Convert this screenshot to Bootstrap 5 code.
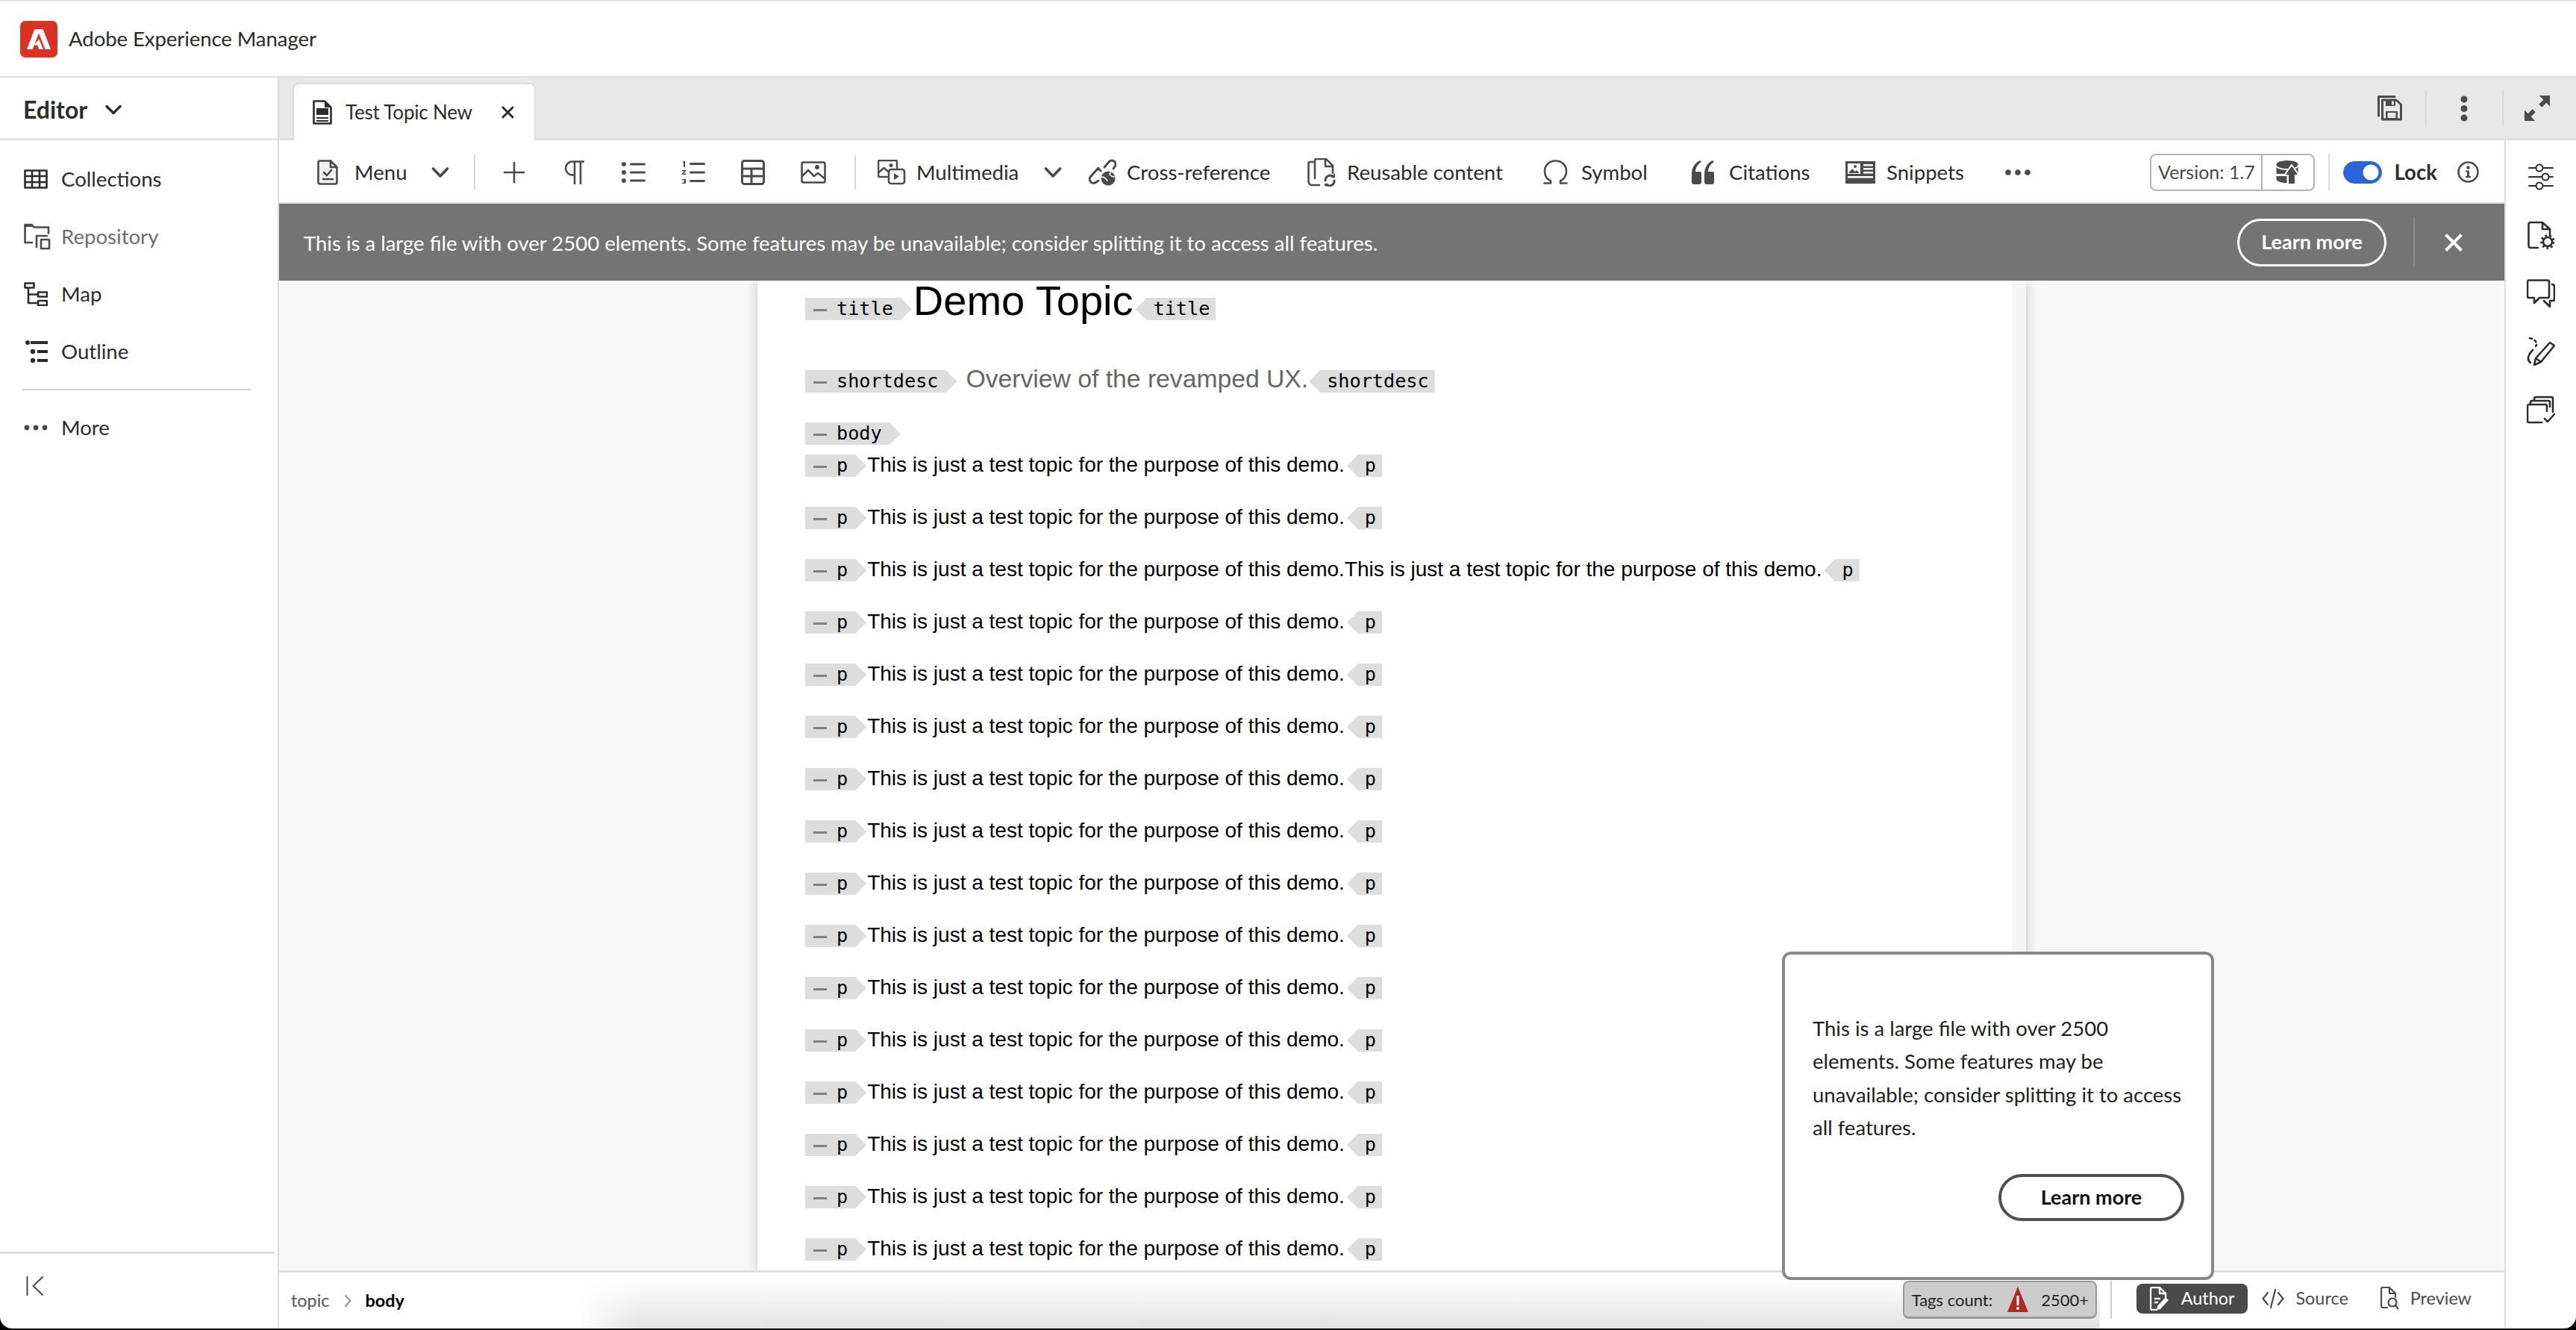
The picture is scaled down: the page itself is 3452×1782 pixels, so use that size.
<!DOCTYPE html>
<html lang="en">
<head>
  <meta charset="UTF-8">
  <title>Adobe Experience Manager</title>
  <link href="https://cdn.jsdelivr.net/npm/bootstrap@5.3.0/dist/css/bootstrap.min.css" rel="stylesheet">
  <style>
    html, body { height: 100%; }
    body {
      font-family: Lato, "Noto Sans", sans-serif;
      font-size: 27.6px;
      color: #2c2c2c;
      background: #000;
      overflow: hidden;
      border-top: 2px solid #e4e4e4;
      border-bottom: 2px solid #000;
    }
    svg { display: block; flex: none; }
    .st { fill: none; stroke: #4b4b4b; stroke-width: 2.6; stroke-linecap: round; stroke-linejoin: round; }
    .fl { fill: #4b4b4b; stroke: none; }
    .dk { stroke: #2c2c2c; }
    .dkf { fill: #2c2c2c; }

    /* top bar */
    .app-head { height: 102px; padding-left: 27px; background: #fff; border-bottom: 2px solid #ddd; flex: none; }
    .app-name { margin-left: 15px; font-size: 27.6px; letter-spacing: -.1px; }
    .app-main { min-height: 0; background: #fff; border-radius: 0 0 16px 16px; overflow: hidden; }

    /* left pane */
    .side-pane { width: 372px; flex: none; }
    .side-title { height: 84px; padding: 4px 0 0 31px; border-bottom: 3px solid #e4e4e4; font-size: 32px; font-weight: 700; }
    .side-title svg { margin-left: 24px; }
    .side-nav { padding-top: 13px; }
    .side-nav .nav-link { height: 77px; padding: 0 0 0 32px; display: flex; align-items: center; color: #2c2c2c; }
    .side-nav .nav-link.muted-link { color: #6e6e6e; }
    .side-nav .nav-icon { width: 50px; flex: none; }
    .side-rule { margin: 12px 36px 11px 30px; height: 2px; background: #d5d5d5; }
    .side-foot { height: 103px; padding: 30px 0 0 35px; border-top: 3px solid #e0e0e0; margin-right: 4px; }

    /* tabs */
    .work-pane { border-left: 2px solid #ddd; min-width: 0; }
    .tab-strip { height: 84px; background: #e8e8e8; border-bottom: 2px solid #ddd; flex: none; padding-left: 18px; }
    .doc-tab { width: 326px; height: 77px; margin-top: 7px; background: #fff; border: 2px solid #ddd; border-bottom: 0; border-radius: 8px 8px 0 0; padding-left: 25px; font-size: 26px; }
    .doc-tab .tab-label { margin: 0 39px 0 18px; letter-spacing: -.2px; white-space: nowrap; }
    .strip-tools { margin-left: auto; height: 100%; }
    .strip-sep { width: 2px; height: 49px; background: #d9d9d9; }

    /* toolbar */
    .tool-bar {
      height: 85px; flex: none; padding: 2px 0 0 51px; border-bottom: 2px solid #ddd;
      display: grid; align-items: center;
      grid-template-columns: 50px 103px 57px 40px 80px 78px 80px 80px 80px 72px 31px 52px 171px 59px 52px 242px 53px 263px 51px 148px 50px 156px 55px 159px 192px auto;
      white-space: nowrap;
    }
    .tool-sep { width: 2px; height: 46px; background: #d9d9d9; }
    .tool-right { padding-right: 34px; justify-self: end; }
    .ver-box { height: 50px; width: 221px; border: 2px solid #b3b3b3; border-radius: 8px; overflow: hidden; }
    .ver-box .btn { border: 0; border-radius: 0; padding: 0; height: 100%; font-size: 25px; color: #4b4b4b; --bs-btn-hover-color: #4b4b4b; }
    .ver-num { width: 149px; border-right: 2px solid #b3b3b3 !important; }
    .ver-up { width: 69px; display: flex; align-items: center; justify-content: center; }
    .lock-sw { margin: 0 0 0 18px; padding: 0 0 0 18px; min-height: 0; border-left: 2px solid #d9d9d9; height: 50px; display: flex; align-items: center; }
    .lock-sw .form-check-input { width: 52px; height: 30px; margin: 0; float: none; background-color: #2c63d8; border-color: #2c63d8; }
    .lock-text { font-weight: 700; margin: 0 27px 0 16px; }

    /* banner */
    .note-bar { height: 103px; flex: none; background: #747474; color: #fff; padding-left: 33px; font-size: 27.5px; position: relative; }
    .note-text { margin-top: 2px; }
    .note-btn { width: 200px; height: 64px; margin-left: auto; padding: 0; border: 3.5px solid #fff; border-radius: 32px; color: #fff; font-size: 27px; font-weight: 700; }
    .note-sep { width: 2px; height: 67px; background: #8a8a8a; margin: 0 40px 0 36px; }
    .note-x { margin-right: 56px; }

    /* document */
    .doc-area { background: #f8f8f8; min-height: 0; }
    .doc-page { width: 1700px; margin-left: 641px; height: 100%; background: #fff; box-shadow: 0 0 14px rgba(0,0,0,.22); border-right: 19px solid #f5f5f5; padding: 12px 0 0 64px; }
    .doc-line { display: flex; align-items: baseline; height: 30px; margin-bottom: 40px; white-space: nowrap; font-family: "Liberation Sans", Arial, sans-serif; font-size: 28px; line-height: 30px; color: #000; }
    .doc-title { font-size: 56px; margin: 0 0 0 2px; height: 40px; }
    .doc-line.line-title { height: 40px; margin-bottom: 64px; }
    .doc-line.line-desc { height: 32px; margin-bottom: 42px; }
    .doc-line.line-body { margin-bottom: 12px; }
    .doc-short { font-size: 33.7px; color: #666; margin: 0 -2px 0 12px; }
    .el-open, .el-close { display: inline-flex; align-items: baseline; background: #ddd; height: 30px; font-family: "DejaVu Sans Mono", monospace; font-size: 25.2px; line-height: 30px; color: #000; }
    .el-open { padding: 0 25px 0 42px; position: relative; clip-path: polygon(0 0, calc(100% - 15px) 0, 100% 50%, calc(100% - 15px) 100%, 0 100%); }
    .el-open::before { content: ""; position: absolute; left: 11px; top: 15px; width: 18px; height: 3px; background: #808080; }
    .el-close { padding: 0 8px 0 24px; margin-left: 3px; clip-path: polygon(15px 0, 100% 0, 100% 100%, 15px 100%, 0 50%); }
    .doc-text { margin-left: 1px; }

    /* status bar */
    .status-bar { height: 78px; flex: none; border-top: 3px solid #ddd; padding: 0 44px 0 16px; position: relative; overflow: hidden; font-size: 23.4px; background: #fff; }
    .status-fade { position: absolute; left: 400px; width: 2040px; top: 8px; bottom: 0; background: linear-gradient(to bottom, rgba(225,225,225,0), #e2e2e2); -webkit-mask-image: linear-gradient(to right, transparent, #000 80px); mask-image: linear-gradient(to right, transparent, #000 80px); }
    .crumb-a { color: #555; position: relative; }
    .crumb-b { font-weight: 700; color: #000; position: relative; }
    .crumb-sep { margin: 0 18px 0 20px; position: relative; }
    .tags-box { margin-left: auto; width: 260px; height: 51px; margin-top: -2px; background: #ccc; border: 2px solid #999; border-bottom-width: 3px; border-radius: 8px; padding: 0 10px; font-size: 22px; position: relative; color: #222; white-space: nowrap; }
    .tags-box svg { margin: 0 16px 0 19px; }
    .view-sep { width: 2px; height: 51px; margin: -2px 33px 0 18px; background: #ccc; }
    .mode-btn { height: 40px; margin-top: -5px; border-radius: 8px; color: #4b4b4b; white-space: nowrap; gap: 15px; }
    .mode-btn.mode-on { background: #4a4a4a; color: #fff; padding: 0 18px; margin-right: 19px; gap: 16px; }
    .mode-btn.mode-mid { margin-right: 43px; }

    /* right rail */
    .tool-rail { width: 96px; flex: none; border-left: 2px solid #ddd; padding-top: 30px; gap: 40px; }
    .rail-slot { height: 38px; }

    /* popover */
    .hint-pop { position: absolute; right: 96px; margin-right: 389px; bottom: 65px; width: 579px; height: 440px; background: #fff; border: 4px solid #888; border-radius: 12px; padding: 77px 37px 0; font-size: 27.5px; line-height: 44.4px; color: #1f1f1f; }
    .hint-btn { display: block; margin: 39px -1px 0 auto; width: 249px; height: 63px; padding: 0; border: 4px solid #505050; border-radius: 32px; font-size: 27px; font-weight: 700; color: #111; background: #fff; }
  </style>
</head>
<body class="d-flex flex-column">
  <header class="app-head d-flex align-items-center">
    <svg width="50" height="49" viewBox="0 0 50 49"><rect width="50" height="49" rx="7" fill="#db3323"/><path fill="#fff" d="M19.5 11 9 38h7.6L25 16.5 33.6 38H41L30.5 11z"/><path fill="#fff" d="M25.2 24.5 31 38h-5.6l-2.2-5.6h-5z"/></svg>
    <span class="app-name">Adobe Experience Manager</span>
  </header>

  <div class="app-main d-flex flex-grow-1">
    <aside class="side-pane d-flex flex-column">
      <div class="side-title d-flex align-items-center">
        Editor
        <svg width="22" height="14" viewBox="0 0 22 14"><path class="st dk" style="stroke-width:3.4" d="M2 2.5l9 9 9-9"/></svg>
      </div>
      <nav class="nav flex-column side-nav flex-grow-1">
        <a class="nav-link" href="#"><span class="nav-icon"><svg width="32" height="26" viewBox="0 0 32 26"><path class="st dk" stroke-linecap="butt" d="M1.5 1.5h29v23h-29zM1.5 9h29M1.5 17h29M11 1.5v23M21 1.5v23"/></svg></span>Collections</a>
        <a class="nav-link muted-link" href="#"><span class="nav-icon"><svg width="36" height="36" viewBox="0 0 36 36"><path class="st" d="M11 26H1.5V2h9l3 3.5H33v8"/><path class="fl" d="M1 1h10l3 4H1z"/><path class="st" d="M17 17h14M17 17v15M23 22h11v12H23z"/></svg></span>Repository</a>
        <a class="nav-link" href="#"><span class="nav-icon"><svg width="32" height="32" viewBox="0 0 32 32"><path class="st dk" d="M1.5 1.5h12v6h-12zM19 13.500h12v6H19zM19 25h12v6H19zM6 8v20h13M6 16.500h13"/></svg></span>Map</a>
        <a class="nav-link" href="#"><span class="nav-icon"><svg width="32" height="30" viewBox="0 0 32 30"><g class="dkf"><circle cx="5" cy="3" r="3"/><rect x="9" y="1" width="23" height="4"/><circle cx="12" cy="15" r="3.2"/><rect x="18" y="13" width="14" height="4"/><circle cx="12" cy="27" r="3.2"/><rect x="18" y="25" width="14" height="4"/></g></svg></span>Outline</a>
        <div class="side-rule"></div>
        <a class="nav-link" href="#"><span class="nav-icon"><svg width="32" height="8" viewBox="0 0 32 8"><g class="fl"><circle cx="4" cy="4" r="3.4"/><circle cx="16" cy="4" r="3.4"/><circle cx="28" cy="4" r="3.4"/></g></svg></span>More</a>
      </nav>
      <div class="side-foot">
        <svg width="24" height="26" viewBox="0 0 24 26"><path class="st" style="stroke-width:2" d="M1.5 0v26M22 1 9.5 13 22 25"/></svg>
      </div>
    </aside>

    <div class="work-pane flex-grow-1 d-flex flex-column position-relative">
      <div class="tab-strip d-flex">
        <div class="doc-tab d-flex align-items-center">
          <svg width="26" height="33" viewBox="0 0 26 33"><path class="st dk" d="M1.5 1.5H16L24.5 10v21.5h-23z"/><path class="dkf" d="M16 1l9 9h-9zM5 11h16v9H5zM5 23h16v2H5zM5 27h16v2H5z"/></svg>
          <span class="tab-label">Test Topic New</span>
          <svg width="17" height="17" viewBox="0 0 17 17"><path class="st dk" style="stroke-width:3" d="M2 2l13 13M15 2 2 15"/></svg>
        </div>
        <div class="strip-tools d-flex align-items-center">
          <svg width="33" height="34" viewBox="0 0 33 34"><path class="st" style="stroke-width:3" d="M1.5 27V1.5H23"/><path class="st" style="stroke-width:3" d="M6.5 6h18.500L31.500 12v20h-25z"/><path class="fl" d="M11 6h13v8H11zM11 21h16v10H11z"/><path fill="#e8e8e8" d="M19 7.500h3v5h-3zM13.500 23h11v7h-11z"/></svg>
          <span class="strip-sep" style="margin:0 41px 0 31px"></span>
          <svg width="18" height="35" viewBox="0 0 18 35"><g class="fl"><circle cx="9" cy="5" r="4.500"/><circle cx="9" cy="17.500" r="4.500"/><circle cx="9" cy="30" r="4.500"/></g></svg>
          <span class="strip-sep" style="margin:0 27px 0 42px"></span>
          <svg width="36" height="36" viewBox="0 0 36 36"><path class="fl" d="M20.500 1H35v14.500l-4.700-4.700-6 6-4-4 6-6zM1 35V20.500l4.700 4.700 6-6 4 4-6 6L15 35z"/></svg>
          <span style="width:34px"></span>
        </div>
      </div>

      <div class="d-flex flex-grow-1" style="min-height:0">
        <div class="flex-grow-1 d-flex flex-column" style="min-width:0">
          <div class="tool-bar">
            <svg width="28" height="34" viewBox="0 0 28 34"><path fill="#f1f1f1" stroke="#4b4b4b" stroke-width="2.600" stroke-linejoin="round" d="M3 1.500h15L26.500 10v20a2.500 2.500 0 0 1-2.500 2.500H4A2.500 2.500 0 0 1 1.500 30V4A2.500 2.500 0 0 1 3 1.500z"/><path class="st" d="M18 1.500V10h8.500M9 17l4 4 6-7M8 26h13"/></svg>
            <span>Menu</span>
            <svg width="24" height="16" viewBox="0 0 24 16"><path class="st" style="stroke-width:3.600" d="M2.500 3l9.500 10 9.500-10"/></svg>
            <span class="tool-sep"></span>
            <svg width="28" height="28" viewBox="0 0 28 28"><path class="st" style="stroke-linecap:butt" d="M14 0v28M0 14h28"/></svg>
            <svg width="28" height="32" viewBox="0 0 28 32"><path class="st" style="stroke-linecap:butt" d="M28 1.500H12a9 9 0 0 0 0 18h3M15 1.500V32M23 1.500V32"/></svg>
            <svg width="32" height="28" viewBox="0 0 32 28"><g class="fl"><circle cx="3" cy="3" r="3"/><circle cx="3" cy="14" r="3"/><circle cx="3" cy="25" r="3"/><rect x="11" y="1.500" width="21" height="3" rx="1.500"/><rect x="11" y="12.500" width="21" height="3" rx="1.500"/><rect x="11" y="23.500" width="21" height="3" rx="1.500"/></g></svg>
            <svg width="32" height="32" viewBox="0 0 32 32"><g class="fl"><rect x="11" y="3" width="21" height="3" rx="1.500"/><rect x="11" y="14.500" width="21" height="3" rx="1.500"/><rect x="11" y="26" width="21" height="3" rx="1.500"/><path d="M3 1h2v8H3V3H1.500zM1 13h5v1.500l-3 3h3V19H1v-1.500l3-3H1zM1 25h5v6H1v-1.300h3.200v-1.100H2v-1.200h2.200v-1.100H1z"/></g></svg>
            <svg width="32" height="34" viewBox="0 0 32 34"><rect class="st" style="stroke-width:3" x="1.500" y="1.500" width="29" height="31" rx="3"/><path class="st" style="stroke-width:3" d="M1.500 12h29M1.500 22h29M14 12v20.500"/></svg>
            <svg width="34" height="30" viewBox="0 0 34 30"><rect class="st" x="1.500" y="1.500" width="31" height="27" rx="2"/><path class="st" d="M2 20l8-8 8 8 5-4 9 7"/><circle class="fl" cx="22" cy="8" r="3"/></svg>
            <span class="tool-sep"></span>
            <svg width="38" height="34" viewBox="0 0 38 34"><path class="st" d="M13 23H3a2 2 0 0 1-2-2V3a2 2 0 0 1 2-2h21a2 2 0 0 1 2 2v8"/><path class="st" d="M1.500 17l7-6 6 5"/><circle class="fl" cx="18" cy="7.500" r="2.500"/><rect class="st" x="15" y="13" width="21" height="19" rx="3"/><path class="fl" d="M22 18l7 4.500-7 4.500z"/></svg>
            <span>Multimedia</span>
            <svg width="24" height="16" viewBox="0 0 24 16"><path class="st" style="stroke-width:3.600" d="M2.500 3l9.500 10 9.500-10"/></svg>
            <svg width="38" height="36" viewBox="0 0 38 36"><path class="st" style="stroke-width:3" d="M22 11l6-7a5 5 0 0 1 8 6l-2 3M14 12L4 23a5 5 0 0 0 7 8l3-2M15 14l2 2"/><circle class="fl" cx="27" cy="26" r="9.500"/><path class="st" style="stroke:#fff;stroke-width:1.500" d="M18 24c4 0 6 2 8 5M30 18c-2 3 0 5 5 6"/></svg>
            <span>Cross-reference</span>
            <svg width="38" height="38" viewBox="0 0 38 38"><path class="st" d="M8 5H3.500A2 2 0 0 0 1.500 7v24a5 5 0 0 0 5 5H16"/><path class="st" d="M10 27V3a2 2 0 0 1 2-2h13l9 9v10"/><path class="st" d="M24 1v10h10"/><path class="st" style="stroke-width:3" d="M24 30a6.500 6.500 0 0 1 11-5M36 30a6.500 6.500 0 0 1-11 5"/><path class="fl" d="M31 26h6v-6zM29 34h-6v4z"/></svg>
            <span>Reusable content</span>
            <svg width="33" height="33" viewBox="0 0 33 33"><path class="st" d="M1.500 31.500H10v-3C5 26 2 21 2 15.500 2 7.500 8 1.500 16.500 1.500S31 7.500 31 15.500C31 21 28 26 23 28.500v3h8.500"/></svg>
            <span>Symbol</span>
            <svg width="31" height="32" viewBox="0 0 31 32"><g class="fl"><path d="M11 0C4 3 0 10 0 18v11a3 3 0 0 0 3 3h7a3 3 0 0 0 3-3V17a2 2 0 0 0-2-2H5c0-5 3-10 8-13z"/><path d="M28 0c-7 3-11 10-11 18v11a3 3 0 0 0 3 3h7a3 3 0 0 0 3-3V17a2 2 0 0 0-2-2h-6c0-5 3-10 8-13z"/></g></svg>
            <span>Citations</span>
            <svg width="40" height="30" viewBox="0 0 40 30"><path class="fl" d="M0 0h40v30H0z"/><path fill="#fff" d="M3 3h17v14H3zM24 4h13v2.600H24zM24 9h13v2.600H24zM24 14h13v2.600H24zM3 20h34v2.600H3z"/><path class="fl" d="M4 16l5-6 4 4 2-2 4 4z"/><circle class="fl" cx="13" cy="7" r="2"/></svg>
            <span>Snippets</span>
            <svg width="34" height="8" viewBox="0 0 34 8"><g class="fl"><circle cx="4" cy="4" r="3.800"/><circle cx="17" cy="4" r="3.800"/><circle cx="30" cy="4" r="3.800"/></g></svg>
            <div class="tool-right d-flex align-items-center">
              <div class="ver-box btn-group">
                <button class="btn ver-num" type="button">Version: 1.7</button>
                <button class="btn ver-up" type="button"><svg width="32" height="32" viewBox="0 0 32 32"><ellipse class="fl" cx="15" cy="5.500" rx="14.500" ry="5.500"/><path class="fl" d="M.5 9c3 3 10 4 14.500 4s11.500-1 14.500-4v9H.5z"/><path class="fl" d="M.5 21h14v9C7 30 .5 28 .5 25z"/><path fill="#4b4b4b" stroke="#fff" stroke-width="2" d="M21 6l10 14h-5v12H16V20h-5z"/></svg></button>
              </div>
              <div class="form-check form-switch lock-sw">
                <input class="form-check-input" type="checkbox" role="switch" checked>
              </div>
              <span class="lock-text">Lock</span>
              <svg width="29" height="29" viewBox="0 0 29 29"><circle class="st" cx="14.500" cy="14.500" r="13"/><circle class="fl" cx="14.500" cy="8.500" r="2.200"/><path class="fl" d="M11 12.500h5V20h2v2h-7v-2h2v-5.500h-2z"/></svg>
            </div>
          </div>

          <div class="note-bar d-flex align-items-center">
            <span class="note-text">This is a large file with over 2500 elements. Some features may be unavailable; consider splitting it to access all features.</span>
            <button class="btn note-btn" type="button">Learn more</button>
            <span class="note-sep"></span>
            <svg class="note-x" width="24" height="24" viewBox="0 0 24 24"><path fill="none" stroke="#fff" stroke-width="4" d="M1.500 1.500l21 21M22.500 1.500l-21 21"/></svg>
          </div>

          <div class="doc-area flex-grow-1">
            <div class="doc-page" id="doc-page">
              <div class="doc-line line-title"><span class="el-open">title</span><span class="doc-title">Demo Topic</span><span class="el-close">title</span></div>
              <div class="doc-line line-desc"><span class="el-open">shortdesc</span><span class="doc-short">Overview of the revamped UX.</span><span class="el-close">shortdesc</span></div>
              <div class="doc-line line-body"><span class="el-open">body</span></div>
            </div>
          </div>

          <div class="status-bar d-flex align-items-center">
            <div class="status-fade"></div>
            <span class="crumb-a">topic</span>
            <svg class="crumb-sep" width="10" height="18" viewBox="0 0 10 18"><path fill="none" stroke="#8e8e8e" stroke-width="2" d="M1.500 1.500l7 7.500-7 7.500"/></svg>
            <span class="crumb-b">body</span>
            <div class="tags-box d-flex align-items-center">
              Tags count:
              <svg width="30" height="36" viewBox="0 0 30 36"><path fill="#ae2a25" d="M15 1l14 34H1z"/><rect fill="#fff" x="13.500" y="13" width="3" height="13"/><circle fill="#fff" cx="15" cy="30" r="2"/></svg>
              2500+
            </div>
            <span class="view-sep"></span>
            <span class="mode-btn mode-on d-flex align-items-center">
              <svg width="26" height="32" viewBox="0 0 26 32"><path fill="none" stroke="#fff" stroke-width="2.400" stroke-linejoin="round" d="M10 31H3a2 2 0 0 1-2-2V3a2 2 0 0 1 2-2h10l8 8v6M13 1v8h8M6 16h8M6 21h5"/><path fill="#fff" d="M21 14l4 4-11 12-5 1 1-5z"/></svg>
              Author
            </span>
            <span class="mode-btn mode-mid d-flex align-items-center">
              <svg width="30" height="28" viewBox="0 0 30 28"><path fill="none" stroke="#4b4b4b" stroke-width="2.200" stroke-linecap="round" stroke-linejoin="round" d="M8 6l-6.500 8L8 22M22 6l6.500 8L22 22M18 2l-6 24"/></svg>
              Source
            </span>
            <span class="mode-btn d-flex align-items-center">
              <svg width="25" height="32" viewBox="0 0 25 32"><path fill="none" stroke="#4b4b4b" stroke-width="2.200" stroke-linecap="round" stroke-linejoin="round" d="M9 28H3a2 2 0 0 1-2-2V3a2 2 0 0 1 2-2h9l8 8v5M12 1v8h8"/><circle cx="16" cy="21" r="5.500" fill="none" stroke="#4b4b4b" stroke-width="2.200"/><path fill="none" stroke="#4b4b4b" stroke-width="2.400" d="M20 25l4 5"/></svg>
              Preview
            </span>
          </div>
        </div>

        <div class="tool-rail d-flex flex-column align-items-center">
          <svg class="rail-slot" width="34" height="38" viewBox="0 0 34 38"><path class="st dk" style="stroke-width:2" d="M1 7h9M20 7h13M1 19h17M28 19h5M1 31h9M20 31h13"/><circle class="st dk" style="stroke-width:2" cx="15" cy="7" r="4.500"/><circle class="st dk" style="stroke-width:2" cx="23" cy="19" r="4.500"/><circle class="st dk" style="stroke-width:2" cx="15" cy="31" r="4.500"/></svg>
          <svg class="rail-slot" width="36" height="38" viewBox="0 0 36 38"><path class="st dk" d="M14 36H4a2.500 2.500 0 0 1-2.500-2.500v-29A2.500 2.500 0 0 1 4 2h16l10 9v9M20 2v9h10"/><circle class="st dk" cx="27" cy="28" r="6"/><circle cx="27" cy="28" r="8.500" fill="none" stroke="#2c2c2c" stroke-width="2.600" stroke-dasharray="3 3"/></svg>
          <svg class="rail-slot" width="38" height="38" viewBox="0 0 38 38"><path class="st dk" d="M3 1.500h25a2 2 0 0 1 2 2V23a2 2 0 0 1-2 2H17l-7 7v-7H3a2 2 0 0 1-2-2V3.500a2 2 0 0 1 2-2z"/><path class="st dk" d="M34 7c2 0 3 1 3 3v17a2 2 0 0 1-2 2h-4v8l-8-8"/></svg>
          <svg class="rail-slot" width="38" height="38" viewBox="0 0 38 38"><path class="st dk" stroke-dasharray="3 4" d="M4 1c8 2 11 7 8 11"/><path class="st dk" d="M5 34C-1 29 3 22 8 17"/><path class="st dk" d="M31 7l6 4-18 22-9 4 2-9zM12 28l7 5"/></svg>
          <svg class="rail-slot" width="38" height="38" viewBox="0 0 38 38"><path class="st dk" d="M10 7V4a2 2 0 0 1 2-2h21a2 2 0 0 1 2 2v18M5 12V9a2 2 0 0 1 2-2h22a2 2 0 0 1 2 2v6"/><path class="st dk" d="M20 36H3a2 2 0 0 1-2-2V14a2 2 0 0 1 2-2h22a2 2 0 0 1 2 2v7M24 31l4 4 9-10"/></svg>
        </div>
      </div>

      <div class="hint-pop">
        This is a large file with over 2500 elements. Some features may be unavailable; consider splitting it to access all features.
        <button class="btn hint-btn" type="button">Learn more</button>
      </div>
    </div>
  </div>

  <script>
    // the paragraph rows repeat, only the third one is doubled
    const sentence = 'This is just a test topic for the purpose of this demo.';
    const page = document.getElementById('doc-page');
    for (let i = 0; i < 16; i++) {
      const row = document.createElement('div');
      row.className = 'doc-line';
      row.innerHTML = `<span class="el-open">p</span><span class="doc-text">${i === 2 ? sentence + sentence : sentence}</span><span class="el-close">p</span>`;
      page.appendChild(row);
    }
  </script>
</body>
</html>
